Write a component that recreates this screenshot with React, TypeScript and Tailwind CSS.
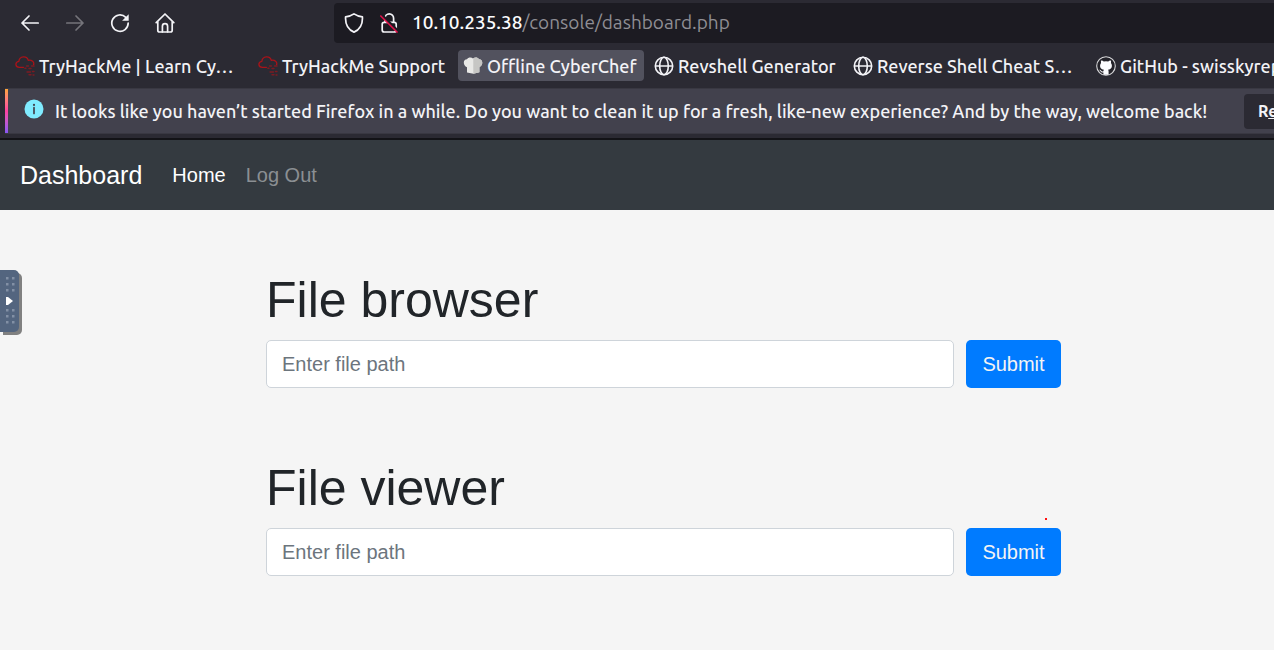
import React from "react";

const ArrowIcon = ({ flip = false }: { flip?: boolean }) => (
  <svg
    viewBox="0 0 20 20"
    className={flip ? "size-5 rotate-180" : "size-5"}
    fill="none"
    stroke="currentColor"
    strokeWidth="1.7"
    strokeLinecap="round"
    strokeLinejoin="round"
    aria-hidden="true"
  >
    <path d="M18.2 10H2M9 3 2 10l7 7" />
  </svg>
);

const ReloadIcon = () => (
  <svg viewBox="0 0 20 20" className="size-5" fill="none" stroke="currentColor" strokeWidth="1.7" strokeLinecap="round" aria-hidden="true">
    <path d="M15.8 4.3A8.2 8.2 0 1 0 18.2 10" />
    <path d="M18.7 1.2v6.6h-6.6z" fill="currentColor" stroke="none" />
  </svg>
);

const HomeIcon = () => (
  <svg viewBox="0 0 20 20" className="size-5" fill="none" stroke="currentColor" strokeWidth="1.7" strokeLinecap="round" strokeLinejoin="round" aria-hidden="true">
    <path d="M1.2 9.6 10 1l8.8 8.6M2.8 8.4V17.2q0 1.8 1.8 1.8h10.8q1.8 0 1.8-1.8V8.4" />
    <path d="M7.4 18.8V13.2a2.6 2.6 0 0 1 5.2 0v5.6" />
  </svg>
);

const ShieldIcon = () => (
  <svg viewBox="0 0 20 20" className="size-5" fill="none" stroke="currentColor" strokeWidth="1.7" strokeLinejoin="round" aria-hidden="true">
    <path d="M10 .9C7.6 2.6 4.8 3.5 1.6 3.9c-.4 6.6 1.5 12.2 8.4 15.2 6.9-3 8.8-8.6 8.4-15.2C15.2 3.5 12.4 2.6 10 .9z" />
  </svg>
);

const InsecureLockIcon = () => (
  <svg viewBox="0 0 20 20" className="size-5" fill="none" stroke="currentColor" strokeWidth="1.7" aria-hidden="true">
    <rect x="2.200" y="9.300" width="14" height="9.700" rx="2" />
    <path d="M5 9V5.200a4.300 4.300 0 0 1 8.600 0V9" />
    <path d="M1.500 1.700 18.500 18.700" stroke="#1c1b22" strokeWidth="3" />
    <path d="M.3 2.500 17.500 19.500" stroke="#e2124b" strokeWidth="1.600" />
  </svg>
);

const CloudIcon = () => (
  <svg viewBox="0 0 20 20" className="size-5 shrink-0" fill="none" stroke="#a81319" strokeWidth="1.3" strokeLinecap="round" aria-hidden="true">
    <path d="M8.5 11.300H4.300C.2 11.200-.4 6.300 3.800 5.300 4.600-.2 12-.5 13.300 4.300c3.600-.5 6.200 1.600 5.300 4.400" />
    <path d="M11.500 10h2M16.500 10h2.600M9.800 12.200h1.200M14 12.500h2M12 16h3.500M17.500 15.500h1.500M14 18.700h2M18 19h1" strokeWidth="1.400" strokeOpacity=".65" />
  </svg>
);

const ChefHatIcon = () => (
  <svg viewBox="0 0 20 20" className="size-5 shrink-0" aria-hidden="true">
    <path d="M4 16.500V11.300C-.2 9.500-.3 3.200 4 3.200 5 1.300 8.500 1 10 2.500c1.700-1.500 5-1.200 6 .8 4.300.1 4.300 6.200.4 7.900v5l-6 1.600z" fill="#e8e8e6" />
    <path d="M10.300 2.300c1.700-1.300 4.700-1 5.700 1 4.300.1 4.300 6.200.4 7.900v5l-6.100 1.600z" fill="#c6c6c4" />
  </svg>
);

const GlobeIcon = () => (
  <svg viewBox="0 0 20 20" className="size-5 shrink-0" fill="none" stroke="currentColor" strokeWidth="1.6" aria-hidden="true">
    <circle cx="10" cy="10" r="8.700" />
    <ellipse cx="10" cy="10" rx="4.300" ry="8.700" />
    <path d="M1.300 10h17.400" />
  </svg>
);

const GitHubIcon = () => (
  <svg viewBox="0 0 20 20" className="size-5 shrink-0" aria-hidden="true">
    <circle cx="10" cy="10" r="9.300" fill="#24232a" stroke="#d8d8da" strokeWidth="1.100" />
    <path d="M5.200 4.400c1 0 2 .5 2.700 1.100a9 9 0 0 1 4.200 0c.7-.6 1.700-1.100 2.700-1.100.4 1 .4 1.700.1 2.500 2.200 2.900.7 6.500-2.900 6.900.5.500.6 1 .6 1.800v3.200H7.400v-2.300c-2.300.4-2.600-.8-3.200-1.700-.3-.4-.6-.7-1-.9 1.700-.5 1.900 1.600 3.200 1.600.4 0 .8-.1 1-.3.1-.6.300-1.100.6-1.400-3.600-.4-5.100-4-2.900-6.900-.3-.8-.3-1.500.1-2.500z" fill="#fbfbfe" />
  </svg>
);

const InfoIcon = () => (
  <svg viewBox="0 0 20 20" className="size-5 shrink-0" aria-hidden="true">
    <circle cx="10" cy="10" r="9.500" fill="#80ebff" />
    <circle cx="10" cy="5.900" r="1.100" fill="#42414d" />
    <path d="M10 8.700v5.800" stroke="#42414d" strokeWidth="1.700" strokeLinecap="round" />
  </svg>
);

const bookmarks = [
  { label: "TryHackMe | Learn Cy…", icon: <CloudIcon />, style: "w-[238px]" },
  { label: "TryHackMe Support", icon: <CloudIcon />, style: "w-[200px]" },
  { label: "Offline CyberChef", icon: <ChefHatIcon />, style: "w-[186px] bg-[#52525e]" },
  { label: "Revshell Generator", icon: <GlobeIcon />, style: "w-[194px]" },
  { label: "Reverse Shell Cheat S…", icon: <GlobeIcon />, style: "w-[238px]" },
  { label: "GitHub - swisskyrepo", icon: <GitHubIcon />, style: "w-[238px]" },
];

function BrowserChrome() {
  return (
    <header className="overflow-hidden border-b-2 border-[#131317] bg-[#2b2a33] pb-1 font-['Ubuntu','Noto_Sans',sans-serif] text-[#f3f3f7]">
      <div className="flex h-[45px] items-center pl-5">
        <div className="flex w-[314px] shrink-0 gap-[25px]">
          <button type="button" aria-label="Back"><ArrowIcon /></button>
          <button type="button" aria-label="Forward" disabled className="text-[#75747b]"><ArrowIcon flip /></button>
          <button type="button" aria-label="Reload"><ReloadIcon /></button>
          <button type="button" aria-label="Home"><HomeIcon /></button>
        </div>
        <div className="flex h-10 min-w-0 flex-1 items-center rounded-l bg-[#1c1b22] pl-[10px] text-[19px]">
          <ShieldIcon />
          <span className="ml-4"><InsecureLockIcon /></span>
          <p className="ml-3 whitespace-nowrap font-medium text-[#8f8e94]">
            <span className="text-[#fbfbfe]">10.10.235.38</span><span className="font-normal">/console/dashboard.php</span>
          </p>
        </div>
      </div>
      <nav aria-label="Bookmarks" className="flex h-[43px] items-center gap-[5px] pb-[2px] pl-[10px]">
        {bookmarks.map((b) => (
          <a key={b.label} href="#" className={`flex h-[31px] shrink-0 items-center gap-1 overflow-hidden whitespace-nowrap rounded pl-[5px] text-lg font-medium ${b.style}`}>
            {b.icon}
            {b.label}
          </a>
        ))}
      </nav>
      <div role="status" className="ml-[5px] flex h-[46px] border-y border-[#393842] bg-[#42414d]">
        <div className="w-[3px] shrink-0 bg-linear-to-b from-[#ffa436] via-[#ff3fa0] to-[#8855f6]" />
        <div className="flex items-center whitespace-nowrap pl-4 text-lg">
          <span className="pb-1"><InfoIcon /></span>
          <p className="ml-[11px] w-[1189px] shrink-0 font-medium">
            It looks like you haven’t started Firefox in a while. Do you want to clean it up for a fresh, like-new experience? And by the way, welcome back!
          </p>
          <button type="button" className="h-[35px] shrink-0 rounded bg-[#2b2a33] px-[14px] text-base font-bold">
            R<span className="underline">e</span>fresh
          </button>
        </div>
      </div>
    </header>
  );
}

function PathForm({ title, id, marked = false }: { title: string; id: string; marked?: boolean }) {
  return (
    <section>
      <h1 className="mb-[10px] text-[50px] leading-[60px]">
        <label htmlFor={id}>{title}</label>
      </h1>
      <form className="relative flex gap-3" onSubmit={(e) => e.preventDefault()}>
        <input
          id={id}
          type="text"
          placeholder="Enter file path"
          className="h-12 min-w-0 flex-1 rounded-[5px] border border-[#ced4da] bg-white px-[15px] placeholder:text-[#6c757d]"
        />
        <button type="submit" className="h-12 w-[95px] rounded-[5px] bg-[#007bff] text-[#f4f4f4]">
          Submit
        </button>
        {marked && <span aria-hidden="true" className="absolute -top-[10px] right-[14px] size-[2px] bg-[#ff1010]" />}
      </form>
    </section>
  );
}

const SideHandle = () => (
  <button type="button" aria-label="Open side panel" className="absolute left-0 top-[60px] h-[62px] w-[19px] rounded-r-[5px] bg-[#53657f] shadow-[3px_3px_0_#808080]">
    <svg viewBox="0 0 19 62" className="h-[62px] w-[19px]" aria-hidden="true">
      {[8, 14, 20, 40, 46, 52].map((y) => (
        <g key={y} fill="#8290a5">
          <rect x="6" y={y - 1} width="2.500" height="2.500" />
          <rect x="12" y={y - 1} width="2.500" height="2.500" />
        </g>
      ))}
      <path d="M6 27h2l5 4-5 4H6z" fill="#fff" />
    </svg>
  </button>
);

export default function App() {
  return (
    <div className="flex min-h-screen flex-col overflow-x-hidden bg-[#f5f5f5] font-['Liberation_Sans',Arial,sans-serif] text-xl text-[#212529]">
      <BrowserChrome />
      <nav aria-label="Main" className="flex h-[70px] items-center bg-[#343a40] pl-5">
        <a href="#" className="mr-[30px] text-[25px] text-white">Dashboard</a>
        <div className="flex gap-5">
          <a href="#" className="text-white">Home</a>
          <a href="#" className="text-[#8b8f93]">Log Out</a>
        </div>
      </nav>
      <main className="relative flex flex-1 flex-col gap-[70px] pl-[266px] pr-[213px] pt-[60px]">
        <SideHandle />
        <PathForm title="File browser" id="browse-path" />
        <PathForm title="File viewer" id="view-path" marked />
      </main>
    </div>
  );
}
